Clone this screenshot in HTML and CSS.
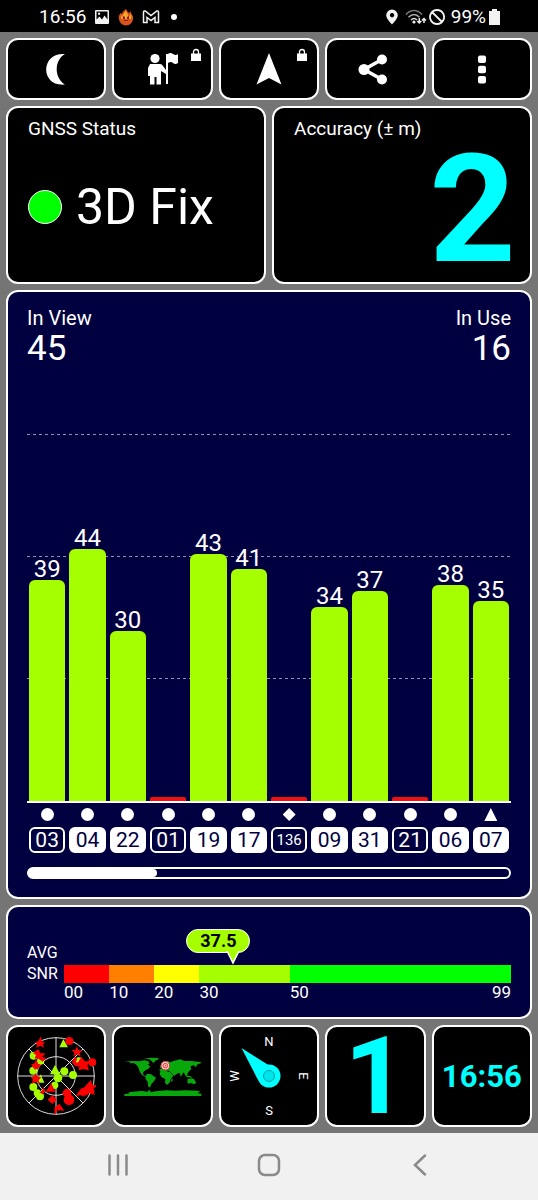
FILE: index.html
```html
<!DOCTYPE html>
<html lang="en">
<head>
<meta charset="utf-8">
<meta name="viewport" content="width=device-width, initial-scale=1">
<title>GNSS Status</title>
<link rel="stylesheet" href="styles.css">
</head>
<body>
<div class="screen">
  <header class="statusbar">
    <div class="status-group">
      <span>16:56</span>
      <svg width="16" height="16" viewBox="0 0 16 16"><path fill="#f2f2f2" fill-rule="evenodd" d="M2 1h12q1 0 1 1v12q0 1-1 1H2q-1 0-1-1V2q0-1 1-1zM2.500 2.500v8l3-3 2.500 3 2.500-4 3 4v-8zM5 3.500a1.200 1.200 0 1 0 .1 0z"/></svg>
      <svg width="16" height="18" viewBox="0 0 16 18"><path fill="#d9541a" d="M8 1c1 2 2 3 3 4l2-2c-1 3 3 4 2 8a7 6.500 0 0 1-14 0c-1-3 1-4 1-6l2 1c0-2 2-3 4-5z"/><path fill="#f5a52c" d="M8 2c0 3 3 4 2 7l3-3c0 2 1 3 0 5H4C2 9 3 8 4 7c0 1 1 2 1 2-1-3 2-4 3-7z"/><path d="M5 8l2 1v2H5zM11 8L9 9v2h2zM5 13q3-2 6 0" fill="#8a1d0a"/></svg>
      <svg width="18" height="16" viewBox="0 0 18 16"><path d="M1.500 13.500V3.200q0-1.700 1.700-1.200L9 6.500 14.800 2q1.700-.500 1.700 1.200v10.300H13V8.500l-4 3-4-3v5z" fill="none" stroke="#f2f2f2" stroke-width="1.500"/></svg>
      <i class="more-dot"></i>
    </div>
    <div class="status-group status-right">
      <svg width="14" height="16" viewBox="0 0 14 16"><path fill="#f2f2f2" fill-rule="evenodd" d="M7 .500a5.800 5.800 0 0 1 5.800 5.800C12.800 10 7 15.500 7 15.500S1.200 10 1.200 6.300A5.800 5.800 0 0 1 7 .500zM7 4a2.200 2.200 0 1 0 .1 0z"/></svg>
      <svg class="wifi" width="22" height="16" viewBox="0 0 22 16"><g fill="none" stroke-width="1.500"><path d="M1 5.500q8-8 16 0" stroke="#777"/><path d="M3.500 8.300q5.500-5.500 11 0" stroke="#aaa"/><path d="M6 11q3-3 6 0" stroke="#ddd"/></g><circle cx="9" cy="13" r="1.600" fill="#eee"/><path d="M14.300 9v5m-2-2l2 2 2-2M19 14V9.500m-2 2l2-2 2 2" fill="none" stroke="#eee" stroke-width="1.500"/></svg>
      <svg width="16" height="16" viewBox="0 0 16 16"><path d="M3 3l10 10M8 1a7 7 0 1 0 .1 0z" fill="none" stroke="#f2f2f2" stroke-width="1.800"/></svg>
      <span>99%</span>
      <svg width="11" height="16" viewBox="0 0 11 16"><path fill="#f2f2f2" d="M3 0h5v2h3v14H0V2h3z"/></svg>
    </div>
  </header>

  <main class="dashboard">
    <nav class="row five">
      <button class="panel tool" aria-label="Night mode"><svg width="100" height="58" viewBox="0 0 100 58"><path fill="#fff" d="M59 14C34 12 34 47 59 44.500 48 38 48 20 59 14z"/></svg></button>
      <button class="panel tool" aria-label="Mark location"><svg width="100" height="58" viewBox="0 0 100 58"><g fill="#fff"><circle cx="42" cy="18.500" r="4.600"/><path d="M37 24h10q2 0 3 2l3 4v-16h2q2-2 5 0t5 0v9q-3 2-5 0t-5 0v21h-2V34l-5-3v13.500h-4.500V37h-2v7.500h-4.500V36h-2V28z"/></g></svg><svg class="lock" width="12" height="14" viewBox="0 0 12 14"><path d="M1 5.500h10V13H1z" fill="#fff"/><path d="M3.500 6V4q0-2.500 2.500-2.500T8.500 4v2" fill="none" stroke="#fff" stroke-width="1.300"/></svg></button>
      <button class="panel tool" aria-label="Navigate"><svg width="100" height="58" viewBox="0 0 100 58"><path fill="#fff" d="M50 13l12.500 31.500L50 38l-12.500 6.500z"/></svg><svg class="lock" width="12" height="14" viewBox="0 0 12 14"><path d="M1 5.500h10V13H1z" fill="#fff"/><path d="M3.500 6V4q0-2.500 2.500-2.500T8.500 4v2" fill="none" stroke="#fff" stroke-width="1.300"/></svg></button>
      <button class="panel tool" aria-label="Share"><svg width="100" height="58" viewBox="0 0 100 58"><path d="M57 19.500l-18 10 18 10" fill="none" stroke="#fff" stroke-width="3.500"/><g fill="#fff"><circle cx="57" cy="19.500" r="5"/><circle cx="39" cy="29.500" r="5.500"/><circle cx="57" cy="39.500" r="5"/></g></svg></button>
      <button class="panel tool" aria-label="Menu"><svg width="100" height="58" viewBox="0 0 100 58"><g fill="#fff"><rect x="46" y="15.500" width="8" height="7.500" rx="2"/><rect x="46" y="25.800" width="8" height="7.500" rx="2"/><rect x="46" y="36.100" width="8" height="7.500" rx="2"/></g></svg></button>
    </nav>

    <div class="row two">
      <section class="panel stat">
        <h2>GNSS Status</h2>
        <p class="fix"><i class="led"></i>3D Fix</p>
      </section>
      <section class="panel stat">
        <h2>Accuracy (± m)</h2>
        <p class="accuracy">2</p>
      </section>
    </div>

    <section class="panel blue satellites">
      <div class="counts">
        <div>In View<strong>45</strong></div>
        <div class="in-use">In Use<strong>16</strong></div>
      </div>
      <div class="plot">
        <div class="bar-slot"><b>39</b><i class="bar" style="height:60.2%"></i></div>
        <div class="bar-slot"><b>44</b><i class="bar" style="height:68.6%"></i></div>
        <div class="bar-slot"><b>30</b><i class="bar" style="height:46.3%"></i></div>
        <div class="bar-slot"><i class="bar none" style="height:1.1%"></i></div>
        <div class="bar-slot"><b>43</b><i class="bar" style="height:67.3%"></i></div>
        <div class="bar-slot"><b>41</b><i class="bar" style="height:63.2%"></i></div>
        <div class="bar-slot"><i class="bar none" style="height:1.1%"></i></div>
        <div class="bar-slot"><b>34</b><i class="bar" style="height:53.0%"></i></div>
        <div class="bar-slot"><b>37</b><i class="bar" style="height:57.2%"></i></div>
        <div class="bar-slot"><i class="bar none" style="height:1.1%"></i></div>
        <div class="bar-slot"><b>38</b><i class="bar" style="height:58.8%"></i></div>
        <div class="bar-slot"><b>35</b><i class="bar" style="height:54.5%"></i></div>
      </div>
      <div class="sats">
        <div><i class="dot"></i><span class="id open">03</span></div>
        <div><i class="dot"></i><span class="id">04</span></div>
        <div><i class="dot"></i><span class="id">22</span></div>
        <div><i class="dot"></i><span class="id open">01</span></div>
        <div><i class="dot"></i><span class="id">19</span></div>
        <div><i class="dot"></i><span class="id">17</span></div>
        <div><i class="dot diamond"></i><span class="id open small">136</span></div>
        <div><i class="dot"></i><span class="id">09</span></div>
        <div><i class="dot"></i><span class="id">31</span></div>
        <div><i class="dot"></i><span class="id open">21</span></div>
        <div><i class="dot"></i><span class="id">06</span></div>
        <div><i class="dot triangle"></i><span class="id">07</span></div>
      </div>
      <div class="scroll"><div class="thumb" style="width:26.7%"></div></div>
    </section>

    <section class="panel blue snr">
      <div class="snr-title">AVG<br>SNR</div>
      <div class="scale">
        <div class="track">
          <i class="red"></i><i class="orange"></i><i class="yellow"></i><i class="lime"></i><i class="green"></i>
          <div class="tip" style="left:37.9%"><span>37.5</span><svg width="14" height="14" viewBox="0 0 14 14"><path d="M1 0l6 12 6-12" fill="#a6ff00" stroke="#fff" stroke-width="1.500"/></svg></div>
        </div>
        <div class="ticks"><span class="t10">00</span><span class="t10">10</span><span class="t10">20</span><span class="t20">30</span><span class="t49">50</span><span>99</span></div>
      </div>
    </section>

    <div class="row five">
      <button class="panel tile" aria-label="Sky view">
        <svg width="80" height="80" viewBox="48 48 240 240">
          <g fill="none" stroke="#ddd" stroke-width="3"><circle cx="168" cy="168" r="115"/><circle cx="168" cy="168" r="58"/><path d="M168 53v230M53 168h230M87 87l162 162M87 249L249 87"/></g>
          <g fill="#a6ff00"><circle cx="101" cy="107" r="12"/><circle cx="122" cy="123" r="11"/><circle cx="100" cy="152" r="12"/><circle cx="100" cy="201" r="12"/><circle cx="112" cy="219" r="11"/><circle cx="120" cy="229" r="12"/><circle cx="174" cy="174" r="13"/><circle cx="193" cy="154" r="12"/><circle cx="219" cy="165" r="12"/><circle cx="236" cy="124" r="12"/><circle cx="164" cy="196" r="11"/><path d="M165 135l16 28h-31zM190 57l14 25h-26zM122 163l11 25h-24z"/></g>
          <g fill="#f00"><circle cx="208" cy="63" r="12"/><circle cx="277" cy="127" r="12"/><circle cx="201" cy="219" r="13"/><circle cx="207" cy="239" r="16"/><path d="M122 49l4 16 9 1-6 6 3 11-11-6-12 6 2-12-6-5 10-2zM115 88l6 12 15 0-10 12 13 1-11 12-16-11-9 2 5-11-9-6zM108 118l7 15 10 1-9 9-11 6-7-8-5-7 11-4zM106 159l8 12 10 1-8 9 3 10-12-6-12 7 4-14-7-6 11-3zM231 79l4 12 12 0-8 8 3 11-11-7-11 6 3-11-8-8 12-1zM224 110l8 7-5 10 9 1 3 9-16-1-7-10zM244 110l10 14 17 0-9 12 5 15-18-4-13 4 2-12-15 0 12-14zM272 180l5 15 17 1-13 9 3 20-16-6-12 10-4-16-15-3 16-8zM246 203l9 14-2 13-11-5-15 3 9-13zM154 190l12 25h-29zM130 200l6 13-8 10-10-6 9-5zM157 226l14 13-14 13-14-13zM178 251l15 21-21-1-8 16-1-23z"/></g>
        </svg>
      </button>
      <button class="panel tile" aria-label="World map">
        <svg width="80" height="80" viewBox="368 48 240 240">
          <g fill="#08a80c"><path d="M372 123l13 1 14-1 17 1 16-3 12 3 4 8-7 1 9 6-6 7-9 5-8 7 3 8 8 3 6 6-5-2-13-7-8-11-3-11-6-9-9-6-13 1 3-3zM430 115l22-2 21 1 3 4-8 2-9 9-6-7-8-5zM439 161l13 2 15 10-6 11-8 8-4 11-6-5-1-13-7-9zM480 154l15-2 14 5 10 10-8 11-4 11-7 6-6-7 1-11-11-5-6-9zM478 140l10-11 14-7 7 5 13-5 18-4 12 5 22 0 25 3 5 3-12 4-6 9-5-6-11 3 3 8-9 9-4 10-5-1-6-8-7 13-5-12-10 5-5 5-10-10-6-6-13 0-14 2-2-6 7-2zM561 178l12-3 8 2 7 13-9 2-8-3-9 2zM553 165l18 4 5 4-17-2zM514 176l4 2-3 8-3-2zM372 222l12-1 4-5 36-3 18 2 5-6 5 8 13-3 35-3 26 1 31-1 35 1 8 3-9 4 12 2v7H372z"/></g>
          <circle cx="495" cy="137" r="13" fill="#fdd" stroke="#c33" stroke-width="3"/><circle cx="495" cy="137" r="7" fill="#fbb" stroke="#d33" stroke-width="3"/><circle cx="495" cy="137" r="2" fill="#d22"/>
        </svg>
      </button>
      <button class="panel tile" aria-label="Compass">
        <svg class="compass" width="96" height="96" viewBox="0 0 96 96"><path d="M20.500 20L49 38l8 10-9 9-11-5z" fill="#0ff"/><circle cx="48" cy="48" r="11.500" fill="#0ff"/><circle cx="48" cy="48" r="5.500" fill="#00e5ec" stroke="#079da5"/><g fill="#fff" text-anchor="middle"><text x="48" y="18">N</text><text x="48" y="18" transform="rotate(90 48 48)">E</text><text x="48" y="87">S</text><text x="48" y="18" transform="rotate(-90 48 48)">W</text></g></svg>
      </button>
      <button class="panel tile one">1</button>
      <button class="panel tile clock">16:56</button>
    </div>
  </main>

  <footer class="navbar">
    <button aria-label="Recent apps"><svg width="24" height="24" viewBox="0 0 24 24"><path d="M3.500 2.500v19M12 2.500v19M20.500 2.500v19"/></svg></button>
    <button aria-label="Home"><svg width="24" height="24" viewBox="0 0 24 24"><rect x="2" y="2" width="20" height="20" rx="6"/></svg></button>
    <button aria-label="Back"><svg width="24" height="24" viewBox="0 0 24 24"><path d="M17 2.500L7 12l10 9.500"/></svg></button>
  </footer>
</div>
</body>
</html>
```
FILE: styles.css
```css
* {
  box-sizing: border-box;
}

body {
  margin: 0;
  font-family: Roboto, "Liberation Sans", sans-serif;
  color: #fff;
  background: #757575;
}

button {
  font: inherit;
  color: inherit;
  padding: 0;
  border: 0;
  cursor: pointer;
}

h2,
p {
  margin: 0;
  font-weight: 400;
}

svg {
  display: block;
}

.screen {
  min-height: 100vh;
  display: flex;
  flex-direction: column;
}

.statusbar {
  height: 32px;
  flex: none;
  display: flex;
  justify-content: space-between;
  align-items: center;
  padding: 1px 38px 0 39px;
  background: #000;
  font-size: 19px;
}

.status-group {
  display: flex;
  align-items: center;
  gap: 8px;
}

.status-right {
  gap: 6px;
}

.wifi {
  margin-right: -4px;
}

.status-right span {
  margin-right: -3px;
}

.more-dot {
  width: 6px;
  height: 6px;
  margin-left: 3px;
  border-radius: 50%;
  background: #fff;
}

.dashboard {
  flex: 1;
  display: flex;
  flex-direction: column;
  gap: 6px;
  padding: 6px;
}

.row {
  display: grid;
  gap: 6px;
}

.five {
  grid-template-columns: repeat(5, minmax(0, 1fr));
}

.two {
  grid-template-columns: repeat(2, minmax(0, 1fr));
}

.panel {
  border: 2px solid #fff;
  border-radius: 12px;
  background: #000;
}

.blue {
  background: #000040;
}

.tool {
  position: relative;
  display: flex;
  justify-content: center;
  align-items: center;
  height: 62px;
  overflow: hidden;
}

.tool svg {
  flex: none;
}

.tool .lock {
  position: absolute;
  top: 8px;
  right: 9px;
}

.stat {
  height: 178px;
  display: flex;
  flex-direction: column;
  padding: 9px 14px 0 20px;
}

.stat h2 {
  font-size: 19px;
  line-height: 24px;
}

.fix {
  display: flex;
  align-items: center;
  gap: 14px;
  margin-top: 36px;
  font-size: 50px;
  line-height: 60px;
}

.led {
  width: 34px;
  height: 34px;
  border: 1px solid #fff;
  border-radius: 50%;
  background: #0f0;
}

.accuracy {
  font-size: 151px;
  line-height: 138px;
  font-weight: 700;
  text-align: right;
  color: #0ff;
}

.satellites {
  flex: 1;
  display: flex;
  flex-direction: column;
  padding: 15px 19px 18px;
}

.counts {
  display: flex;
  justify-content: space-between;
  font-size: 20px;
  line-height: 22px;
}

.counts strong {
  display: block;
  font-size: 35px;
  line-height: 40px;
  font-weight: 400;
}

.in-use {
  text-align: right;
}

.plot {
  flex: 1;
  display: grid;
  grid-template-columns: repeat(12, minmax(0, 1fr));
  gap: 4px;
  margin-top: 65px;
  padding: 0 2px;
  border-bottom: 2px solid #fff;
  background:
    repeating-linear-gradient(90deg, transparent 0 3px, #000040 3px 6px),
    linear-gradient(#9090b0, #9090b0) 0 0 / 100% 1px no-repeat,
    linear-gradient(#9090b0, #9090b0) 0 33.4% / 100% 1px no-repeat,
    linear-gradient(#9090b0, #9090b0) 0 66.8% / 100% 1px no-repeat;
}

.bar-slot {
  display: flex;
  flex-direction: column;
  justify-content: flex-end;
  text-align: center;
}

.bar-slot b {
  font-size: 24px;
  line-height: 22px;
  font-weight: 400;
}

.bar {
  flex: none;
  border-radius: 6px 6px 0 0;
  background: #a6ff00;
}

.none {
  border-radius: 2px 2px 0 0;
  background: #f01010;
}

.sats {
  display: grid;
  grid-template-columns: repeat(12, minmax(0, 1fr));
  gap: 4px;
  padding: 5px 2px 0;
}

.sats > div {
  display: flex;
  flex-direction: column;
  align-items: center;
  gap: 6px;
}

.dot {
  width: 13px;
  height: 13px;
  border-radius: 50%;
  background: #fff;
}

.diamond {
  border-radius: 0;
  clip-path: polygon(50% 0, 100% 50%, 50% 100%, 0 50%);
}

.triangle {
  border-radius: 0;
  clip-path: polygon(50% 0, 100% 100%, 0 100%);
}

.id {
  width: 100%;
  height: 26px;
  border: 2px solid #fff;
  border-radius: 6px;
  background: #fff;
  color: #000040;
  font-size: 21px;
  line-height: 22px;
  text-align: center;
}

.open {
  background: none;
  color: #fff;
}

.small {
  font-size: 15px;
}

.scroll {
  height: 12px;
  margin-top: 14px;
  border: 2px solid #fff;
  border-radius: 6px;
}

.thumb {
  height: 100%;
  border-radius: 0 4px 4px 0;
  background: #fff;
}

.snr {
  height: 114px;
  display: flex;
  gap: 5px;
  padding: 35px 19px 0;
  font-size: 17px;
}

.snr-title {
  width: 32px;
  font-size: 16px;
  line-height: 21px;
}

.scale {
  flex: 1;
  padding-top: 23px;
}

.track {
  position: relative;
  display: flex;
  height: 18px;
}

.red,
.orange,
.yellow {
  flex: 10;
  background: #f00;
}

.orange {
  background: #ff8000;
}

.yellow {
  background: #ff0;
}

.lime {
  flex: 20;
  background: #a6ff00;
}

.green {
  flex: 49;
  background: #0f0;
}

.tip {
  position: absolute;
  bottom: 18px;
  width: 64px;
  margin-left: -47px;
}

.tip span {
  display: block;
  height: 24px;
  border: 1px solid #fff;
  border-radius: 12px;
  background: #a6ff00;
  color: #000;
  font-size: 18px;
  line-height: 22px;
  font-weight: 700;
  text-align: center;
}

.tip svg {
  margin: -2px 0 0 40px;
}

.ticks {
  position: relative;
  display: flex;
  line-height: 18px;
}

.ticks span:last-child {
  position: absolute;
  right: 0;
}

.t10 {
  flex: 10 0 0;
}

.t20 {
  flex: 20 0 0;
}

.t49 {
  flex: 49 0 0;
}

.tile {
  display: flex;
  justify-content: center;
  align-items: center;
  height: 102px;
}

.compass {
  font-size: 13px;
}

.one,
.clock {
  color: #0ff;
  font-weight: 700;
}

.one {
  font-size: 108px;
  line-height: 98px;
}

.clock {
  font-size: 31px;
}

.navbar {
  flex: none;
  display: flex;
  height: 67px;
  padding: 0 42px 4px;
  background: #f1f1f1;
}

.navbar button {
  flex: 1;
  display: flex;
  justify-content: center;
  align-items: center;
  background: none;
}

.navbar svg {
  fill: none;
  stroke: #8a8a8a;
  stroke-width: 2.5;
  stroke-linecap: round;
}
```
